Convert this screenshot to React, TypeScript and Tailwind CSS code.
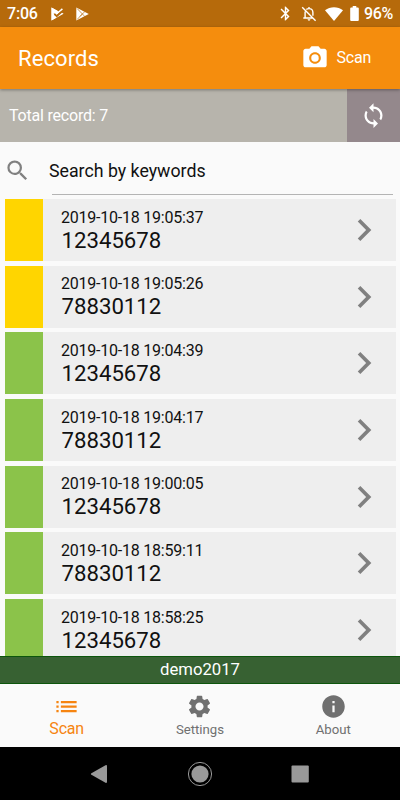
import React from 'react';
import {
    MdBluetooth,
    MdChevronRight,
    MdInfo,
    MdList,
    MdLoop,
    MdPhotoCamera,
    MdSearch,
    MdSettings,
} from 'react-icons/md';

const records = [
    { time: '2019-10-18 19:05:37', code: '12345678', color: 'bg-[#ffd500]' },
    { time: '2019-10-18 19:05:26', code: '78830112', color: 'bg-[#ffd500]' },
    { time: '2019-10-18 19:04:39', code: '12345678', color: 'bg-[#8bc34a]' },
    { time: '2019-10-18 19:04:17', code: '78830112', color: 'bg-[#8bc34a]' },
    { time: '2019-10-18 19:00:05', code: '12345678', color: 'bg-[#8bc34a]' },
    { time: '2019-10-18 18:59:11', code: '78830112', color: 'bg-[#8bc34a]' },
    { time: '2019-10-18 18:58:25', code: '12345678', color: 'bg-[#8bc34a]' },
];

const tabs = [
    { label: 'Scan', Icon: MdList, active: true },
    { label: 'Settings', Icon: MdSettings, active: false },
    { label: 'About', Icon: MdInfo, active: false },
];

function StatusBar() {
    return (
        <div className="flex h-[27px] shrink-0 items-center bg-[#b66a0b] pl-[7px] pr-[7px] text-base font-medium tracking-[-0.2px] text-white">
            <span className="w-[31px] pt-[1px]">7:06</span>
            {/* Update finished */}
            <svg className="ml-[13px]" width="13" height="14" viewBox="0 0 13 14" fill="none">
                <path d="M.5.5v13L12.6 6.8 11 5.8 5.6 10.6 2.6 7.8 4.2 6.3l1.4 1.3 2.6-2.5z" fill="#fff" />
                <path d="M.5.5v13L5.6 10.6 2.6 7.8 4.3 5.2 6 5.5 7 4z" fill="#fff" />
                <path d="M4.3 5.2 5.8 6.7 11.4 1.9" stroke="#fff" strokeWidth="1.5" />
                <path d="M3.2 6.4 5.6 8.8 10.4 4.4" stroke="#b66a0b" strokeWidth=".9" />
            </svg>
            {/* Play store */}
            <svg className="ml-[12px]" width="13" height="14" viewBox="0 0 13 14">
                <path d="M.3.5 12.8 7 .3 13.5z" fill="#fff" />
                <path d="M1.2 1.6 6.4 7l-5.2 5.4M8.8 4.6 4 9.4M8.8 9.4 6.4 7" fill="none" stroke="#b66a0b" strokeWidth=".7" />
            </svg>
            <div className="ml-auto flex items-center">
                <MdBluetooth size={17} />
                {/* Muted bell */}
                <svg className="ml-[7px]" width="16" height="16" viewBox="0 0 16 16" fill="none" stroke="#fff" strokeWidth="1.4">
                    <path d="M1.2 1.2 14.6 14.8M5.3 3.6C6 2.9 7 2.6 8 2.6c2.3 0 3.9 1.7 3.9 4v3.2M4.1 5.6v6M2.3 12h9.6M8 1v1.6" />
                    <path d="M6.6 13.3h2.8c0 .8-.6 1.4-1.4 1.4s-1.4-.6-1.4-1.4z" fill="#fff" stroke="none" />
                </svg>
                <svg className="ml-[8px]" width="18" height="14" viewBox="0 0 18 14">
                    <path d="M0 3.3C5.2-.7 12.8-.7 18 3.3L9 14z" fill="#fff" />
                </svg>
                <svg className="ml-[7px]" width="9" height="15" viewBox="0 0 9 15" fill="#fff">
                    <path d="M2.7 0h3.6v1.6h1.5q1 0 1 1V14q0 1-1 1H1.2q-1 0-1-1V2.6q0-1 1-1h1.5z" />
                </svg>
                <span className="ml-[5px] w-[29px] whitespace-nowrap pt-[1px] tracking-[-0.4px]">96%</span>
            </div>
        </div>
    );
}

export default function App() {
    return (
        <div className="flex h-[800px] w-[400px] flex-col overflow-hidden bg-[#fafafa] font-[Roboto,sans-serif] text-[#111] antialiased">
            <StatusBar />

            {/* App bar */}
            <div className="relative z-10 flex h-[62px] shrink-0 items-center bg-[#f58d0d] pl-[18px] pr-[29px] text-white shadow-[0_1px_3px_rgba(0,0,0,0.35)]">
                <h1 className="pt-[1px] text-[22px] tracking-[0.1px]">Records</h1>
                <button className="ml-auto flex items-center gap-[8px]">
                    <MdPhotoCamera size={28} />
                    <span className="text-base tracking-[-0.25px]">Scan</span>
                </button>
            </div>

            {/* Record count */}
            <div className="flex h-[53px] shrink-0 items-center bg-[#b7b4ac] pl-[9px] text-white">
                <span className="text-base tracking-[-0.2px]">Total record: 7</span>
                <button className="ml-auto flex h-full w-[53px] items-center justify-center bg-[#94888c]">
                    <MdLoop size={27} />
                </button>
            </div>

            {/* Search */}
            <div className="flex h-[57px] shrink-0 pl-[4px] pr-[7px]">
                <MdSearch className="mt-[15px] text-[#808080]" size={27} />
                <div className="ml-[21px] h-[53px] flex-1 border-b-[1.5px] border-[#b4b4b4]">
                    <span className="-ml-[3px] block pt-[15px] text-[17.75px] leading-[28px]">Search by keywords</span>
                </div>
            </div>

            {/* Records */}
            <div className="flex min-h-0 flex-1 flex-col gap-[4.7px] overflow-hidden pl-[5px] pr-[4px]">
                {records.map(({ time, code, color }) => (
                    <div key={time} className="flex h-[62px] shrink-0 items-center bg-[#eee] pr-[10px]">
                        <div className={`h-full w-[38px] ${color}`} />
                        <div className="ml-[18px] flex-1">
                            <div className="text-base leading-[20px] tracking-[-0.22px]">{time}</div>
                            <div className="pl-[0.5px] text-[22.2px] leading-[25px]">{code}</div>
                        </div>
                        <MdChevronRight className="text-[#808080]" size={44} />
                    </div>
                ))}
            </div>

            <div className="flex h-[28px] shrink-0 items-center justify-center border-y border-[#0c560c] bg-[#376132] text-[16.7px] text-white">
                demo2017
            </div>

            {/* Tabs */}
            <div className="grid h-[63px] shrink-0 grid-cols-3">
                {tabs.map(({ label, Icon, active }) => (
                    <button
                        key={label}
                        className={`flex flex-col items-center pt-[9px] ${active ? 'text-[#f68410]' : 'text-[#707070]'}`}
                    >
                        <Icon size={27} />
                        <span className={active ? 'text-base leading-[18px] tracking-[-0.2px]' : 'text-[13.2px] leading-[20px]'}>{label}</span>
                    </button>
                ))}
            </div>

            {/* System navigation */}
            <div className="flex h-[53px] shrink-0 items-center justify-center bg-black">
                <svg width="220" height="28" viewBox="0 0 220 28" fill="#999">
                    <path d="M1.4 13.2 15.5 5.3q1.5-.7 1.5.9v15.6q0 1.6-1.5.9L1.4 14.8q-1.2-.8 0-1.6z" />
                    <circle cx="110" cy="14" r="11.6" fill="none" stroke="#999" />
                    <circle cx="110" cy="14" r="8.6" />
                    <rect x="201.5" y="5.5" width="17.3" height="17" rx="1" />
                </svg>
            </div>
        </div>
    );
}
